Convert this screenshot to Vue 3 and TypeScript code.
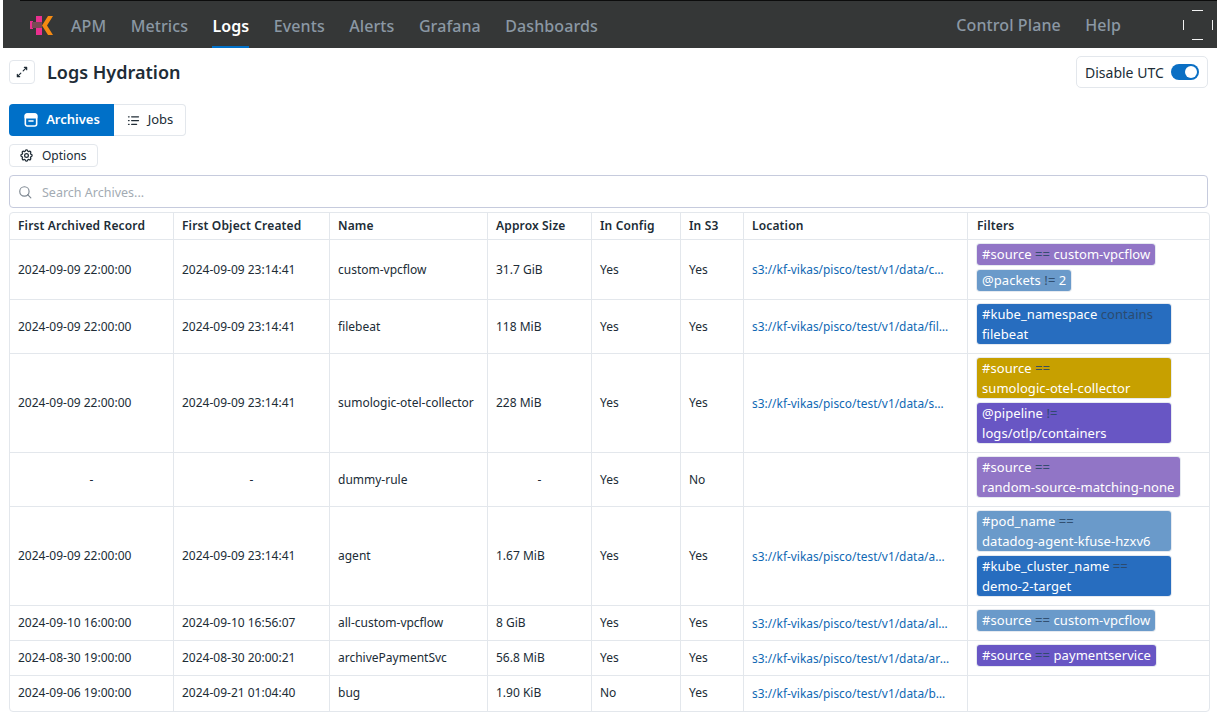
<template>
  <div class="page">
    <header class="nav">
      <svg class="logo" width="24" height="19" viewBox="0 0 24 19">
        <path fill="#e9308f" d="M6 0h6v19H6zM0 5h3v8H0z" />
        <path fill="#7a4a55" d="M2 6h10v6H2z" />
        <path fill="#f58a12" d="M23 0h-5l-6 9.500 6 9.500h5l-6-9.500z" />
      </svg>
      <a v-for="item in navItems" :key="item" class="nav-link" :class="{ active: item === 'Logs' }">{{ item }}</a>
      <div class="nav-right">
        <a class="nav-link">Control Plane</a>
        <a class="nav-link">Help</a>
        <svg class="avatar" width="32" height="32" viewBox="0 0 32 32" stroke="#f2f2f2" fill="none">
          <path d="M10 1.500h11M10 30.500h11M1.500 11v10M30.500 11v10" />
        </svg>
      </div>
    </header>

    <main class="content">
      <div class="title-row">
        <button class="expand-btn">
          <svg width="14" height="14" viewBox="0 0 24 24" fill="none" stroke="#202c36" stroke-width="2" stroke-linecap="round" stroke-linejoin="round">
            <path d="M16 4h4v4M14 10l6-6M8 20H4v-4M4 20l6-6" />
          </svg>
        </button>
        <h1>Logs Hydration</h1>
        <div class="utc-box">
          <span>Disable UTC</span>
          <span class="toggle"><span class="knob"></span></span>
        </div>
      </div>

      <div class="tabs">
        <button class="tab selected">
          <svg width="16" height="16" viewBox="0 0 24 24" fill="none" stroke="#fff" stroke-width="2.400" stroke-linecap="round" stroke-linejoin="round">
            <rect x="3.500" y="3" width="17" height="18" rx="3" />
            <path fill="#fff" d="M3.500 6a3 3 0 0 1 3-3h11a3 3 0 0 1 3 3v2.500h-17z" />
            <path d="M9 13.500h6" />
          </svg>
          <span>Archives</span>
        </button>
        <button class="tab">
          <svg width="15" height="15" viewBox="0 0 24 24" fill="none" stroke="#202c36" stroke-width="2" stroke-linecap="round" stroke-linejoin="round">
            <path d="M9 6h11M9 12h11M9 18h8M4 6h1M4 12h1M4 18h1" />
          </svg>
          <span>Jobs</span>
        </button>
      </div>

      <button class="options">
        <svg width="15" height="15" viewBox="0 0 24 24" fill="none" stroke="#202c36" stroke-width="2" stroke-linecap="round" stroke-linejoin="round">
          <path d="M10.325 4.317c.426-1.756 2.924-1.756 3.35 0a1.724 1.724 0 0 0 2.573 1.066c1.543-.94 3.31.826 2.37 2.37a1.724 1.724 0 0 0 1.065 2.572c1.756.426 1.756 2.924 0 3.35a1.724 1.724 0 0 0-1.066 2.573c.94 1.543-.826 3.31-2.37 2.37a1.724 1.724 0 0 0-2.572 1.065c-.426 1.756-2.924 1.756-3.35 0a1.724 1.724 0 0 0-2.573-1.066c-1.543.94-3.31-.826-2.37-2.37a1.724 1.724 0 0 0-1.065-2.572c-1.756-.426-1.756-2.924 0-3.35a1.724 1.724 0 0 0 1.066-2.573c-.94-1.543.826-3.31 2.37-2.37.996.608 2.296.07 2.572-1.065z" />
          <circle cx="12" cy="12" r="3" />
        </svg>
        Options
      </button>

      <label class="search">
        <svg width="14" height="14" viewBox="0 0 24 24" fill="none" stroke="#7d8791" stroke-width="2" stroke-linecap="round">
          <circle cx="11" cy="11" r="8" />
          <path d="M22 22l-5.500-5.500" />
        </svg>
        <input type="text" placeholder="Search Archives..." />
      </label>

      <table class="grid">
        <colgroup>
          <col v-for="w in colWidths" :key="w.key" :style="{ width: w.px + 'px' }" />
        </colgroup>
        <thead>
          <tr>
            <th v-for="w in colWidths" :key="w.key">{{ w.key }}</th>
          </tr>
        </thead>
        <tbody>
          <tr v-for="row in rows" :key="row.name" :style="{ height: row.h + 'px' }">
            <td :class="{ center: row.first === '-' }">{{ row.first }}</td>
            <td :class="{ center: row.created === '-' }">{{ row.created }}</td>
            <td>{{ row.name }}</td>
            <td :class="{ center: row.size === '-' }">{{ row.size }}</td>
            <td>{{ row.config }}</td>
            <td>{{ row.s3 }}</td>
            <td><a v-if="row.location" class="loc" :title="row.location">{{ row.location }}</a></td>
            <td class="filters">
              <div class="chip-list">
                <span v-for="f in row.filters" :key="f.key" class="chip" :style="{ background: f.color }">
                  {{ f.key }} <span class="op">{{ f.op }}</span> <span class="val">{{ f.value }}</span>
                </span>
              </div>
            </td>
          </tr>
        </tbody>
      </table>
    </main>
  </div>
</template>

<script setup lang="ts">
interface Filter {
  key: string;
  op: string;
  value: string;
  color: string;
}

interface Row {
  first: string;
  created: string;
  name: string;
  size: string;
  config: string;
  s3: string;
  location: string;
  filters: Filter[];
  h: number;
}

const navItems = ["APM", "Metrics", "Logs", "Events", "Alerts", "Grafana", "Dashboards"];

const colWidths = [
  { key: "First Archived Record", px: 164 },
  { key: "First Object Created", px: 156 },
  { key: "Name", px: 158 },
  { key: "Approx Size", px: 104 },
  { key: "In Config", px: 89 },
  { key: "In S3", px: 63 },
  { key: "Location", px: 224 },
  { key: "Filters", px: 241 },
];

const PURPLE = "#9175c6";
const SKY = "#6a9aca";
const BLUE = "#276dbf";
const GOLD = "#c7a000";
const INDIGO = "#6856c4";
const base = "s3://kf-vikas/pisco/test/v1/data/";
const suffix = "/archive/v1/";

const rows: Row[] = [
  {
    first: "2024-09-09 22:00:00", created: "2024-09-09 23:14:41", name: "custom-vpcflow", size: "31.7 GiB",
    config: "Yes", s3: "Yes", location: base + "custom-vpcflow" + suffix, h: 60,
    filters: [
      { key: "#source", op: "==", value: "custom-vpcflow", color: PURPLE },
      { key: "@packets", op: "!=", value: "2", color: SKY },
    ],
  },
  {
    first: "2024-09-09 22:00:00", created: "2024-09-09 23:14:41", name: "filebeat", size: "118 MiB",
    config: "Yes", s3: "Yes", location: base + "filebeat" + suffix, h: 54,
    filters: [{ key: "#kube_namespace", op: "contains", value: "filebeat", color: BLUE }],
  },
  {
    first: "2024-09-09 22:00:00", created: "2024-09-09 23:14:41", name: "sumologic-otel-collector", size: "228 MiB",
    config: "Yes", s3: "Yes", location: base + "sumologic-otel-collector" + suffix, h: 99,
    filters: [
      { key: "#source", op: "==", value: "sumologic-otel-collector", color: GOLD },
      { key: "@pipeline", op: "!=", value: "logs/otlp/containers", color: INDIGO },
    ],
  },
  {
    first: "-", created: "-", name: "dummy-rule", size: "-",
    config: "Yes", s3: "No", location: "", h: 54,
    filters: [{ key: "#source", op: "==", value: "random-source-matching-none", color: PURPLE }],
  },
  {
    first: "2024-09-09 22:00:00", created: "2024-09-09 23:14:41", name: "agent", size: "1.67 MiB",
    config: "Yes", s3: "Yes", location: base + "agent" + suffix, h: 99,
    filters: [
      { key: "#pod_name", op: "==", value: "datadog-agent-kfuse-hzxv6", color: SKY },
      { key: "#kube_cluster_name", op: "==", value: "demo-2-target", color: BLUE },
    ],
  },
  {
    first: "2024-09-10 16:00:00", created: "2024-09-10 16:56:07", name: "all-custom-vpcflow", size: "8 GiB",
    config: "Yes", s3: "Yes", location: base + "all-custom-vpcflow" + suffix, h: 35,
    filters: [{ key: "#source", op: "==", value: "custom-vpcflow", color: SKY }],
  },
  {
    first: "2024-08-30 19:00:00", created: "2024-08-30 20:00:21", name: "archivePaymentSvc", size: "56.8 MiB",
    config: "Yes", s3: "Yes", location: base + "archivePaymentSvc" + suffix, h: 35,
    filters: [{ key: "#source", op: "==", value: "paymentservice", color: INDIGO }],
  },
  {
    first: "2024-09-06 19:00:00", created: "2024-09-21 01:04:40", name: "bug", size: "1.90 KiB",
    config: "No", s3: "Yes", location: base + "bug" + suffix, h: 35,
    filters: [],
  },
];
</script>

<style>
html,
body {
  margin: 0;
  background: #fff;
}
</style>

<style scoped>
.page {
  font-family: "Noto Sans", "Liberation Sans", sans-serif;
  color: #202c36;
  font-size: 12px;
  height: 715px;
  overflow: hidden;
}

.nav {
  position: relative;
  height: 48px;
  margin-left: 3px;
  background: #353737;
  display: flex;
  align-items: center;
  padding-left: 27px;
}

.nav::before {
  content: "";
  position: absolute;
  left: 17px;
  right: 0;
  top: 0;
  height: 1px;
  background: #0c0c0c;
}

.logo {
  margin-right: 17px;
  margin-top: 3px;
}

.nav-link {
  position: relative;
  height: 48px;
  line-height: 52px;
  font-size: 16px;
  font-weight: 500;
  letter-spacing: 0.1px;
  color: #8b98a4;
  margin-right: 24.400px;
}

.nav-link.active {
  color: #fff;
  font-weight: 600;
}

.nav-link.active::after {
  content: "";
  position: absolute;
  left: 0;
  right: 0;
  bottom: 0;
  height: 2px;
  background: #0070c8;
}

.nav-right {
  margin-left: auto;
  display: flex;
  align-items: center;
}

.nav-right .nav-link {
  line-height: 50px;
}

.nav-right .nav-link:nth-child(2) {
  margin-right: 61px;
}

.avatar {
  margin-right: 3px;
  margin-top: 2px;
}

.content {
  padding: 0 9px;
}

.title-row {
  display: flex;
  align-items: center;
  height: 48px;
}

.expand-btn {
  width: 26px;
  height: 24px;
  margin-top: -1px;
  padding: 0;
  border: 1px solid #e3e7ec;
  border-radius: 4px;
  background: #fff;
  display: flex;
  align-items: center;
  justify-content: center;
}

h1 {
  margin: 0 0 0 12px;
  font-size: 18px;
  font-weight: 600;
  line-height: 24px;
}

.utc-box {
  margin-left: auto;
  height: 30px;
  width: 130px;
  border: 1px solid #e3e7ec;
  border-radius: 5px;
  display: flex;
  align-items: center;
  font-size: 14px;
}

.utc-box > span:first-child {
  margin-left: 8px;
}

.toggle {
  width: 28px;
  height: 16px;
  margin-left: auto;
  margin-right: 8px;
  border-radius: 8px;
  background: #0a6fc4;
  position: relative;
}

.knob {
  position: absolute;
  right: 2px;
  top: 2px;
  width: 12px;
  height: 12px;
  border-radius: 50%;
  background: #fff;
}

.tabs {
  display: flex;
  margin-top: 8px;
  height: 32px;
}

.tab {
  font: inherit;
  font-size: 13px;
  color: #202c36;
  background: #fff;
  border: 1px solid #e3e7ec;
  border-left: 0;
  border-radius: 0 4px 4px 0;
  width: 72px;
  display: flex;
  align-items: center;
  justify-content: center;
  gap: 7px;
  padding: 0;
}

.tab span {
  position: relative;
  top: -1px;
}

.tab.selected {
  width: 105px;
  background: #0070c8;
  border: 0;
  border-radius: 4px 0 0 4px;
  color: #fff;
  font-weight: 600;
}

.options {
  font: inherit;
  color: #202c36;
  display: flex;
  align-items: center;
  gap: 8px;
  height: 23px;
  width: 89px;
  margin-top: 8px;
  padding: 0 0 0 9px;
  background: #fff;
  border: 1px solid #e3e7ec;
  border-radius: 4px;
}

.search {
  display: flex;
  align-items: center;
  gap: 10px;
  height: 33px;
  box-sizing: border-box;
  margin-top: 8px;
  padding-left: 8px;
  border: 1px solid #c6cbdd;
  border-radius: 4px;
}

.search input {
  flex: 1;
  border: 0;
  outline: 0;
  padding: 2px 0 0;
  font: inherit;
  font-size: 12.500px;
}

.search input::placeholder {
  color: #a3abb3;
}

.grid {
  width: 1199px;
  margin-top: 4px;
  table-layout: fixed;
  border-collapse: separate;
  border-spacing: 0;
  border: 1px solid #e3e7ec;
  border-radius: 4px;
}

th,
td {
  padding: 0 8px 1px;
  text-align: left;
  border-right: 1px solid #e3e7ec;
  border-bottom: 1px solid #e3e7ec;
  box-sizing: border-box;
  white-space: nowrap;
  overflow: hidden;
}

th:last-child,
td:last-child {
  border-right: 0;
}

tbody tr:last-child td {
  border-bottom: 0;
  padding-bottom: 2px;
}

th {
  height: 27px;
  padding-bottom: 2px;
  font-weight: 600;
  letter-spacing: 0.15px;
}

th:last-child {
  padding-left: 9px;
}

td.center {
  text-align: center;
}

.loc {
  display: block;
  width: 198px;
  overflow: hidden;
  text-overflow: ellipsis;
  color: #0f68b4;
  font-size: 11.900px;
}

td.filters {
  padding: 4px 0 0 9px;
  vertical-align: top;
  white-space: normal;
}

.chip-list {
  display: flex;
  flex-direction: column;
  gap: 5px;
  align-items: flex-start;
}

.chip {
  box-sizing: border-box;
  max-width: 194px;
  min-width: min-content;
  min-height: 21px;
  padding: 0 5px;
  border-radius: 3px;
  color: #fff;
  font-size: 13px;
  letter-spacing: 0.06px;
  line-height: 20px;
  box-shadow: 0 0 0 1px #e6eaf0;
}

.op {
  color: #2c4868;
  opacity: 0.9;
}

.val {
  white-space: nowrap;
}
</style>
